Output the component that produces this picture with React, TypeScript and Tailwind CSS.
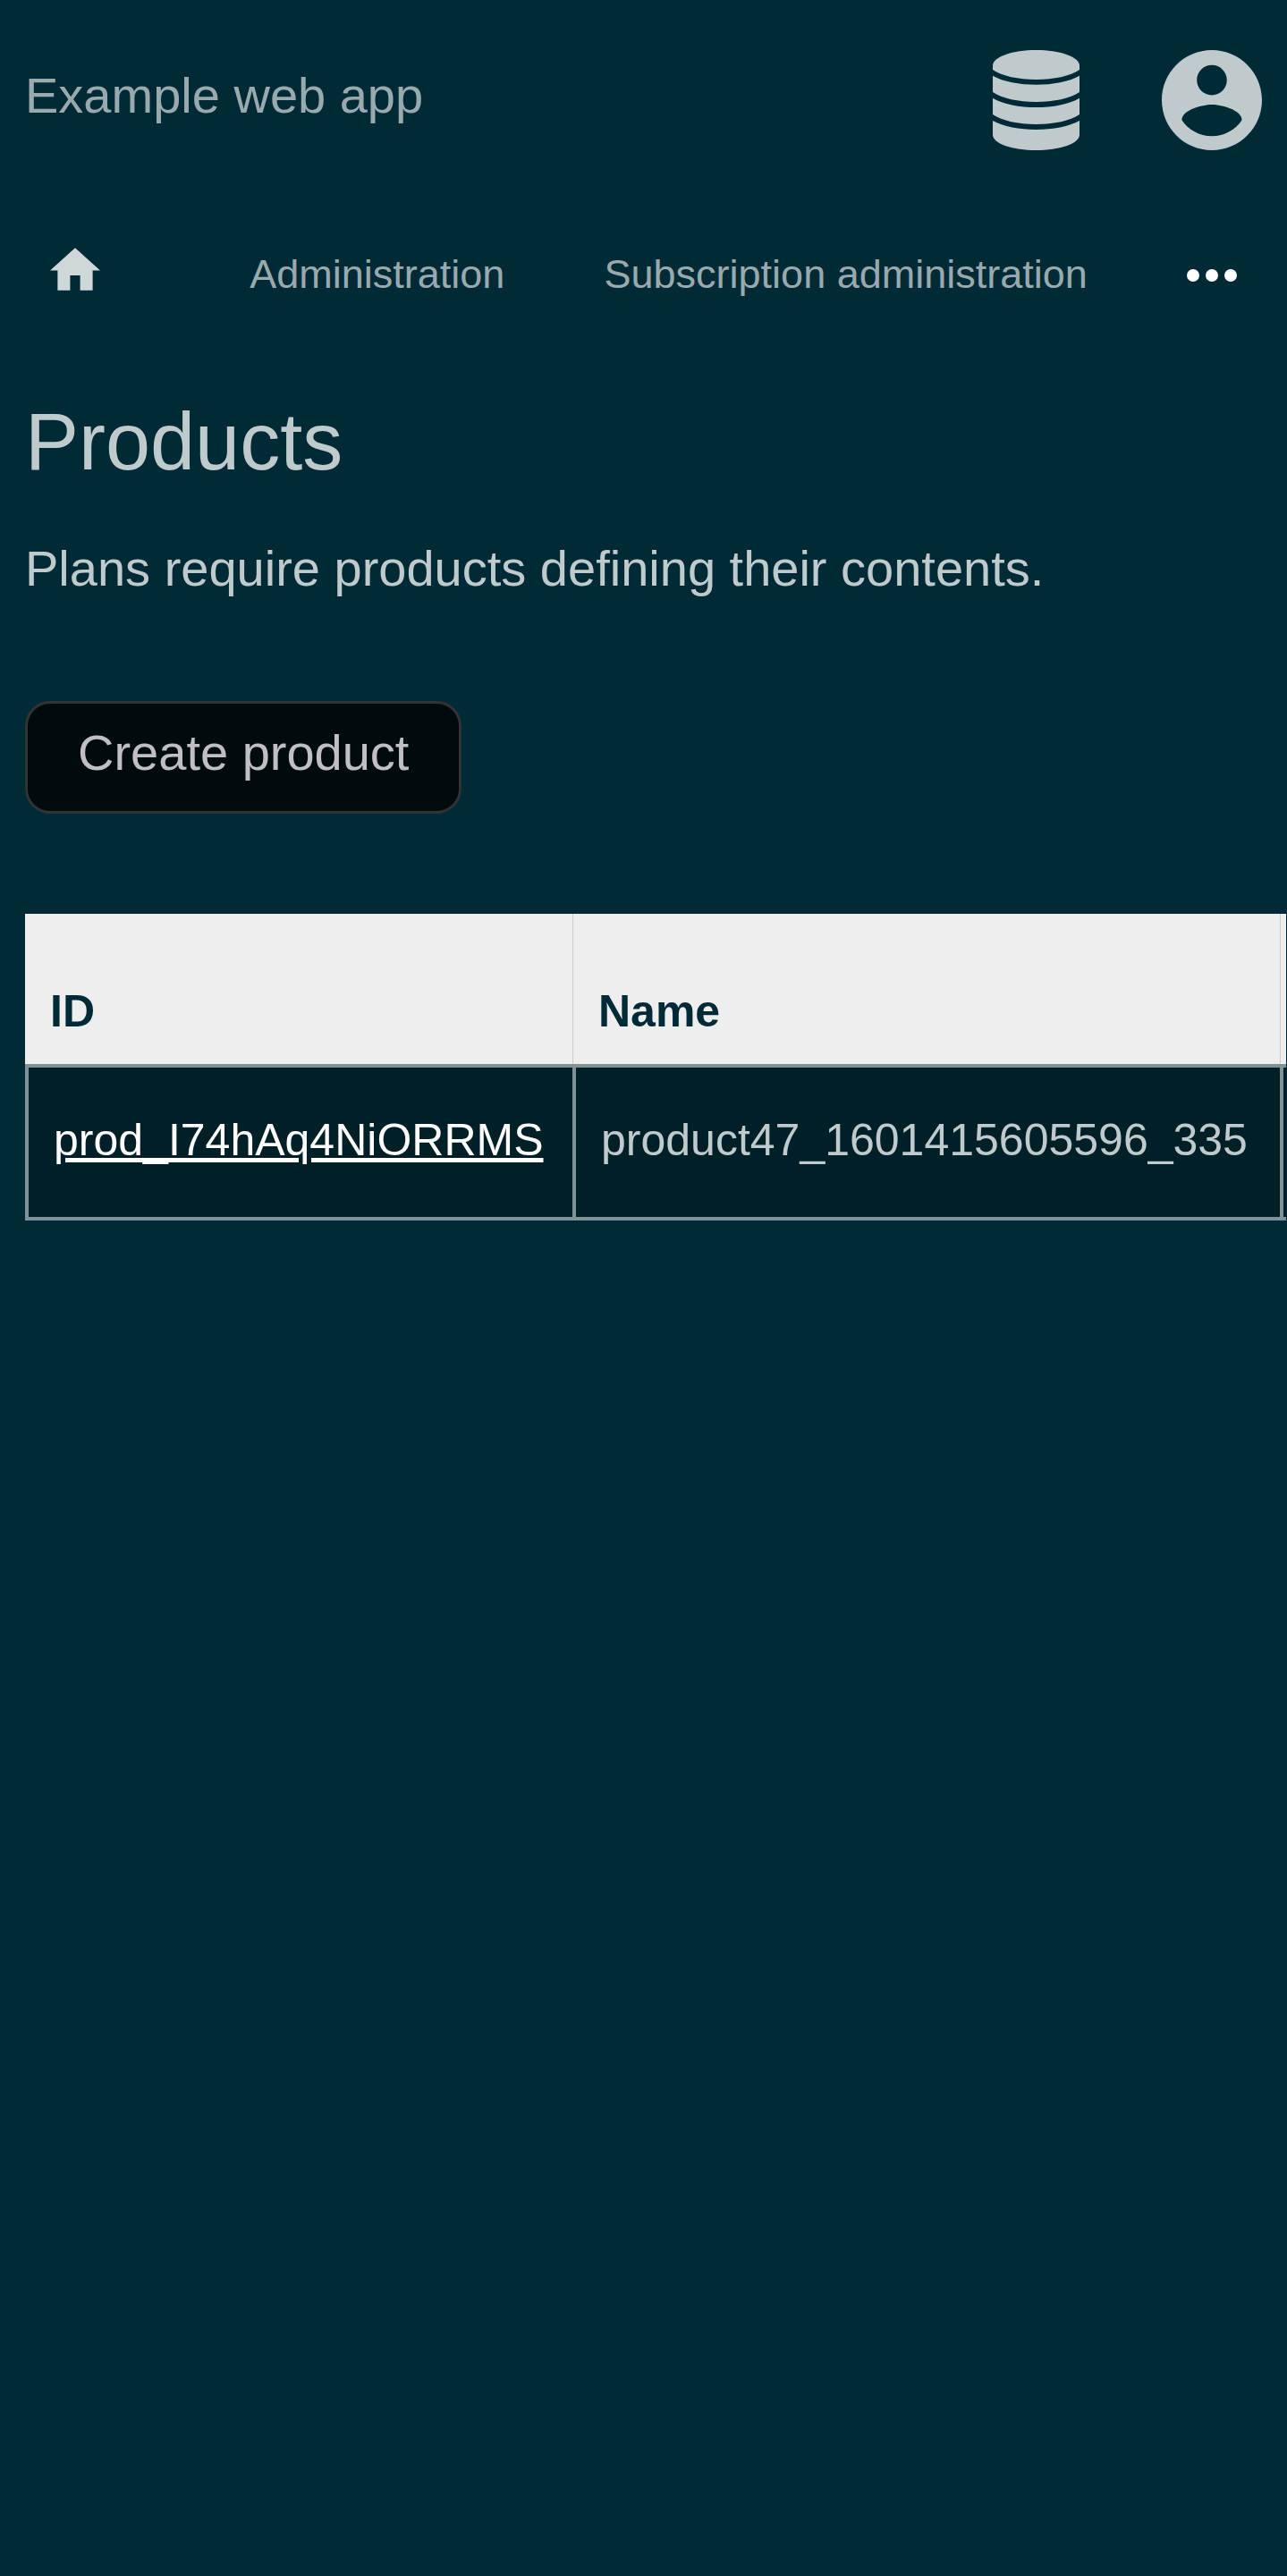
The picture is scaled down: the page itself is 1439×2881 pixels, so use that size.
import React from 'react';

function DatabaseIcon() {
  return (
    <svg viewBox="90 78 291 336" className="h-28 w-[97px] fill-current" aria-hidden="true">
      <path d="M90 130C90 100 158 78 235.500 78S381 100 381 130V144C350 165 295 177 235.500 177S121 165 90 144Z" />
      <path d="M90 164C125 184 180 194 235.500 194S346 184 381 164V219C350 240 295 252 235.500 252S121 240 90 219Z" />
      <path d="M90 239C125 260 180 270 235.500 270S346 260 381 239V294C350 315 295 327 235.500 327S121 315 90 294Z" />
      <path d="M90 315C125 335 180 345 235.500 345S346 335 381 315V362C381 392 312 414 235.500 414S90 392 90 362Z" />
    </svg>
  );
}

function AccountIcon() {
  return (
    <svg viewBox="2 2 20 20" className="size-28 fill-current" aria-hidden="true">
      <path d="M12 2C6.480 2 2 6.480 2 12s4.480 10 10 10 10-4.480 10-10S17.520 2 12 2zm0 3c1.660 0 3 1.340 3 3s-1.340 3-3 3-3-1.340-3-3 1.340-3 3-3zm0 14.200c-2.500 0-4.710-1.280-6-3.220.03-1.990 4-3.080 6-3.080 1.990 0 5.970 1.090 6 3.080-1.290 1.940-3.500 3.220-6 3.220z" />
    </svg>
  );
}

function HomeIcon() {
  return (
    <svg viewBox="2 3 20 17" className="h-12 w-14 fill-current" aria-hidden="true">
      <path d="M10 20v-6h4v6h5v-8h3L12 3 2 12h3v8z" />
    </svg>
  );
}

function MoreIcon() {
  return (
    <svg viewBox="4 10 16 4" className="h-[14px] w-14 fill-current" aria-hidden="true">
      <circle cx="6" cy="12" r="2" />
      <circle cx="12" cy="12" r="2" />
      <circle cx="18" cy="12" r="2" />
    </svg>
  );
}

const products = [{ id: 'prod_I74hAq4NiORRMS', name: 'product47_1601415605596_335' }];

const headCell = 'px-7 pb-[31px] pt-[81px]';
const cell = 'border-l-4 border-y-4 border-[#7f9297] bg-[#002028] px-7 pb-[58px] pt-[53px] text-left';

export default function App() {
  return (
    <div className="min-h-screen bg-[#002b36] font-['Liberation_Sans',Arial,sans-serif] text-[56px] leading-[64px] text-[#bfcacd]">
      <header className="flex items-start justify-between px-7 pt-14">
        <a href="#" className="pt-[19px] text-[#99aaaf]">
          Example web app
        </a>
        <div className="flex gap-[92px]">
          <button type="button" aria-label="Database">
            <DatabaseIcon />
          </button>
          <button type="button" aria-label="Account">
            <AccountIcon />
          </button>
        </div>
      </header>

      <nav className="flex items-center justify-between px-14 pt-[107px] text-[45px] leading-[64px] text-[#99aaaf]">
        <a href="#" aria-label="Home" className="mr-14 pb-3 text-[#cfd7d9]">
          <HomeIcon />
        </a>
        <a href="#">Administration</a>
        <a href="#">Subscription administration</a>
        <button type="button" aria-label="More" className="pt-0.5 text-white">
          <MoreIcon />
        </button>
      </nav>

      <main className="pl-7 pt-[103px]">
        <h1 className="text-[90px] leading-[104px]">Products</h1>
        <p className="pt-[58px]">Plans require products defining their contents.</p>
        <button
          type="button"
          className="mt-[116px] rounded-[28px] border-[3px] border-[#333333] bg-[#000b0d] px-14 pb-[33px] pt-[23px] text-[#c0c0c4]"
        >
          Create product
        </button>

        <div className="mr-px mt-28 overflow-hidden">
          <table className="w-full table-fixed border-separate border-spacing-0 text-[50px] leading-[56px]">
            <thead>
              <tr className="bg-[#eeeeee] text-left text-[#002b36]">
                <th scope="col" className={`${headCell} w-[612px]`}>ID</th>
                <th scope="col" className={`${headCell} w-[791px] border-l border-[#cccccc]`}>Name</th>
                <td className="border-l border-[#cccccc]" />
              </tr>
            </thead>
            <tbody>
              {products.map((product) => (
                <tr key={product.id}>
                  <td className={cell}>
                    <a href="#" className="text-white underline">{product.id}</a>
                  </td>
                  <td className={cell}>{product.name}</td>
                  <td className="border-l-4 border-y-4 border-[#7f9297] bg-[#002028]" />
                </tr>
              ))}
            </tbody>
          </table>
        </div>
      </main>
    </div>
  );
}
